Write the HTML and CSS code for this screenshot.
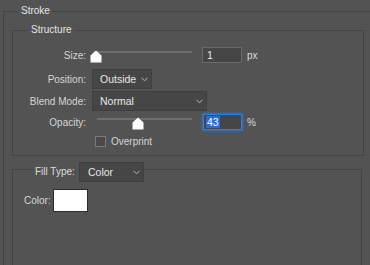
FILE: index.html
```html
<!DOCTYPE html>
<html>
<head>
<meta charset="utf-8">
<link rel="stylesheet" href="styles.css">
</head>
<body>
<fieldset class="group stroke">
  <legend class="legend legend-stroke">Stroke</legend>
  <fieldset class="group structure">
    <legend class="legend legend-structure">Structure</legend>
    <div class="rows">
      <div class="row r-size">
        <span class="label">Size:</span>
        <div class="slider">
          <div class="track track-size"></div>
          <svg class="thumb" style="left:-2px" viewBox="0 0 12 13" width="12" height="13"><path d="M6 0.5 L11.5 5.5 V12.5 H0.5 V5.5 Z" fill="#ffffff"/></svg>
        </div>
        <div class="num">1</div>
        <span class="unit">px</span>
      </div>
      <div class="row r-pos">
        <span class="label">Position:</span>
        <div class="select sel-pos">
          <span>Outside</span>
          <svg class="chev" viewBox="0 0 7 5" width="7" height="5"><polyline points="0.5,0.8 3.5,3.8 6.5,0.8" fill="none" stroke="#bdbdbd" stroke-width="1"/></svg>
        </div>
      </div>
      <div class="row r-blend">
        <span class="label">Blend Mode:</span>
        <div class="select sel-blend">
          <span>Normal</span>
          <svg class="chev" viewBox="0 0 7 5" width="7" height="5"><polyline points="0.5,0.8 3.5,3.8 6.5,0.8" fill="none" stroke="#bdbdbd" stroke-width="1"/></svg>
        </div>
      </div>
      <div class="row r-op">
        <span class="label">Opacity:</span>
        <div class="slider">
          <div class="track track-op"></div>
          <svg class="thumb" style="left:40px" viewBox="0 0 12 13" width="12" height="13"><path d="M6 0.5 L11.5 5.5 V12.5 H0.5 V5.5 Z" fill="#ffffff"/></svg>
        </div>
        <div class="num focus"><span class="sel">43</span></div>
        <span class="unit">%</span>
      </div>
      <div class="row r-check">
        <span class="checkbox"></span>
        <span class="check-label">Overprint</span>
      </div>
    </div>
  </fieldset>
  <fieldset class="group fill">
    <legend class="legend legend-fill">
      <span class="fill-label">Fill Type:</span>
      <div class="select sel-fill">
        <span>Color</span>
        <svg class="chev" viewBox="0 0 7 5" width="7" height="5"><polyline points="0.5,0.8 3.5,3.8 6.5,0.8" fill="none" stroke="#bdbdbd" stroke-width="1"/></svg>
      </div>
    </legend>
    <div class="color-row">
      <span class="color-label">Color:</span>
      <span class="swatch"></span>
    </div>
  </fieldset>
</fieldset>
</body>
</html>
```
FILE: styles.css
```css
* { box-sizing: border-box; }
html, body { margin: 0; padding: 0; }
body {
  width: 370px;
  height: 265px;
  overflow: hidden;
  background: #535353;
  font-family: "Liberation Sans", Arial, sans-serif;
  font-size: 10px;
  color: #d6d6d6;
}
.group {
  border: 1px solid #444444;
  margin: 0;
  padding: 0;
  min-width: 0;
}
.legend {
  padding: 0 3px;
  height: 12px;
  line-height: 12px;
  color: #e4e4e4;
}
.stroke {
  margin: 5px 0 0 3px;
  width: 367px;
  height: 260px;
  border-bottom: 0;
  border-right: 0;
}
.legend-stroke { margin-left: 14px; }
.structure {
  margin: 7px 0 0 8px;
  width: 352px;
  height: 132px;
}
.legend-structure { margin-left: 15px; }
.rows {
  display: flex;
  flex-direction: column;
  padding-top: 10px;
}
.row {
  display: flex;
  align-items: center;
}
.label {
  width: 73px;
  margin-right: 6px;
  text-align: right;
  white-space: nowrap;
}
.r-size { height: 18px; }
.r-pos { height: 20px; margin-top: 5px; }
.r-blend { height: 20px; margin-top: 2px; }
.r-op { height: 18px; margin-top: 2px; }
.r-check { height: 15px; margin-top: 3px; padding-left: 82px; }
.slider {
  position: relative;
  width: 100px;
  height: 18px;
  align-self: flex-start;
}
.track {
  position: absolute;
  right: 0;
  top: 5px;
  height: 2px;
  background: #6e6e6e;
}
.track-size { left: 1px; }
.track-op { left: 5px; }
.thumb {
  position: absolute;
  top: 4px;
  display: block;
}
.num {
  width: 40px;
  height: 16px;
  margin-left: 10px;
  background: #464646;
  border: 1px solid #6a6a6a;
  padding-left: 4px;
  line-height: 14px;
  color: #ececec;
  font-size: 10.5px;
}
.num.focus {
  margin-left: 11px;
  width: 39px;
  padding-left: 2px;
  border-color: #2f7fe0;
  box-shadow: 0 0 2px 1px rgba(40, 125, 235, 0.75);
}
.sel {
  background: #2a6bd4;
  color: #ffffff;
  padding: 0 1px;
}
.unit { margin-left: 5px; color: #dcdcdc; }
.select {
  height: 20px;
  display: flex;
  align-items: center;
  background: #464646;
  border: 1px solid #3f3f3f;
  padding: 0 3px 0 7px;
  color: #e6e6e6;
  font-size: 10.5px;
}
.select .chev { margin-left: auto; display: block; }
.sel-pos { width: 60px; }
.sel-blend { width: 115px; }
.checkbox {
  width: 11px;
  height: 11px;
  background: #4a4a4a;
  border: 1px solid #7a7a7a;
}
.check-label { margin-left: 5px; }
.fill {
  margin: 6px 0 0 8px;
  width: 350px;
  height: 103px;
  border-bottom: 0;
}
.legend-fill {
  margin-left: 20px;
  padding: 0 0 0 2px;
  height: 14px;
  display: flex;
  align-items: flex-start;
}
.fill-label {
  width: 44px;
  line-height: 20px;
  color: #dcdcdc;
}
.sel-fill {
  width: 65px;
  padding-left: 8px;
}
.color-row {
  display: flex;
  align-items: center;
  padding: 13px 0 0 11px;
}
.swatch {
  width: 35px;
  height: 23px;
  margin-left: 2px;
  background: #ffffff;
  border: 1px solid #2c2c2c;
}
```
